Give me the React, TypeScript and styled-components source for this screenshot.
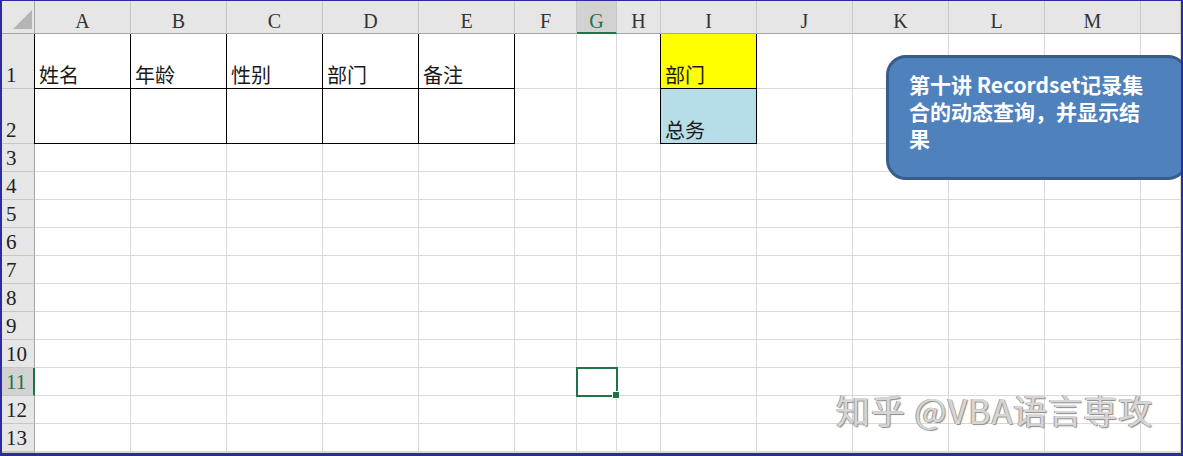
import React from 'react';
import styled, { createGlobalStyle, css } from 'styled-components';

const GlobalStyle = createGlobalStyle`
  html, body {
    margin: 0;
    padding: 0;
    background: #fff;
  }
  * {
    box-sizing: border-box;
  }
`;

const GREEN = '#217346';
const GRID = '#d9d9d9';
const HEAD_LINE = '#a6a6a6';

const columns = [
  { key: 'A', width: 96 },
  { key: 'B', width: 96 },
  { key: 'C', width: 96 },
  { key: 'D', width: 96 },
  { key: 'E', width: 96 },
  { key: 'F', width: 62 },
  { key: 'G', width: 40 },
  { key: 'H', width: 44 },
  { key: 'I', width: 96 },
  { key: 'J', width: 96 },
  { key: 'K', width: 96 },
  { key: 'L', width: 96 },
  { key: 'M', width: 96 },
];

const rowHeights = [55, 55, 28, 28, 28, 28, 28, 28, 28, 28, 28, 28, 28];

type CellData = { text?: string; bg?: string; box?: boolean };

const cells: Record<string, CellData> = {
  A1: { text: '姓名', box: true },
  B1: { text: '年龄', box: true },
  C1: { text: '性别', box: true },
  D1: { text: '部门', box: true },
  E1: { text: '备注', box: true },
  A2: { box: true },
  B2: { box: true },
  C2: { box: true },
  D2: { box: true },
  E2: { box: true },
  I1: { text: '部门', bg: '#ffff00', box: true },
  I2: { text: '总务', bg: '#b7dde8', box: true },
};

const activeCol = 'G';
const activeRow = 11;

const Frame = styled.div`
  position: relative;
  width: 1183px;
  height: 456px;
  overflow: hidden;
  border-style: solid;
  border-color: #2c2ca0;
  border-width: 1px 2px 3px 2px;
  background: #fff;
`;

const Sheet = styled.div`
  display: grid;
  grid-template-columns: 33px ${columns.map((c) => `${c.width}px`).join(' ')} 1fr;
  grid-template-rows: 33px ${rowHeights.map((h) => `${h}px`).join(' ')} 1fr;
  height: 100%;
`;

const Corner = styled.div`
  position: relative;
  background: #e6e6e6;
  border-right: 1px solid ${HEAD_LINE};
  border-bottom: 1px solid ${HEAD_LINE};

  &:after {
    content: '';
    position: absolute;
    right: 2px;
    bottom: 4px;
    width: 0;
    height: 0;
    border-left: 19px solid transparent;
    border-bottom: 19px solid #b5b5b5;
  }
`;

const ColHead = styled.div<{ $active?: boolean }>`
  display: flex;
  align-items: center;
  justify-content: center;
  padding-top: 9px;
  background: ${({ $active }) => ($active ? '#d2d2d2' : '#e6e6e6')};
  border-right: 1px solid #c6c6c6;
  border-bottom: ${({ $active }) => ($active ? `2px solid ${GREEN}` : `1px solid ${HEAD_LINE}`)};
  font-family: 'Liberation Serif', serif;
  font-size: 20px;
  color: ${({ $active }) => ($active ? GREEN : '#333')};
`;

const RowHead = styled.div<{ $active?: boolean }>`
  display: flex;
  align-items: flex-end;
  padding: 0 0 0 4px;
  background: ${({ $active }) => ($active ? '#d2d2d2' : '#e6e6e6')};
  border-bottom: 1px solid #c6c6c6;
  border-right: ${({ $active }) => ($active ? `2px solid ${GREEN}` : `1px solid ${HEAD_LINE}`)};
  font-family: 'Liberation Serif', serif;
  font-size: 21px;
  line-height: 26px;
  color: ${({ $active }) => ($active ? GREEN : '#222')};
`;

const Cell = styled.div<{ $bg?: string; $box?: boolean; $active?: boolean }>`
  position: relative;
  display: flex;
  align-items: flex-end;
  padding: 0 0 0 4px;
  background: ${({ $bg }) => $bg || '#fff'};
  border-right: 1px solid ${GRID};
  border-bottom: 1px solid ${GRID};
  font-family: 'Noto Sans CJK SC', sans-serif;
  font-size: 20px;
  line-height: 26px;
  color: #1a1a1a;
  white-space: nowrap;

  ${({ $box }) =>
    $box &&
    css`
      border-right-color: #000;
      border-bottom-color: #000;
      box-shadow: -1px 0 0 #000;
    `}

  ${({ $active }) =>
    $active &&
    css`
      z-index: 2;
      outline: 2px solid ${GREEN};
      outline-offset: -1px;

      &:after {
        content: '';
        position: absolute;
        right: -4px;
        bottom: -4px;
        width: 6px;
        height: 6px;
        background: ${GREEN};
        border: 1px solid #fff;
      }
    `}
`;

const Callout = styled.div`
  position: absolute;
  left: 884px;
  top: 54px;
  width: 302px;
  height: 125px;
  padding: 13px 20px 0 20px;
  background: #4f81bd;
  border: 3px solid #385d8a;
  border-radius: 20px;
  z-index: 5;
`;

const CalloutText = styled.div`
  width: 240px;
  font-family: 'Noto Sans CJK SC', sans-serif;
  font-weight: 700;
  font-size: 21px;
  line-height: 27px;
  color: #fff;
`;

const Watermark = styled.div`
  position: absolute;
  left: 834px;
  top: 389px;
  z-index: 5;
  font-family: 'Noto Sans CJK SC', sans-serif;
  font-size: 34px;
  line-height: 40px;
  letter-spacing: 1px;
  color: #d6d6d6;
  text-shadow: -1px 0 0 #a0a0a0, 1px 1px 1px #8a8a8a;
  white-space: nowrap;
`;

const App = () => {
  return (
    <>
      <GlobalStyle />
      <Frame>
        <Sheet>
          <Corner />
          {columns.map((c) => (
            <ColHead key={c.key} $active={c.key === activeCol}>
              {c.key}
            </ColHead>
          ))}
          <ColHead />

          {rowHeights.map((_, i) => {
            const row = i + 1;
            return (
              <React.Fragment key={row}>
                <RowHead $active={row === activeRow}>{row}</RowHead>
                {columns.map((c) => {
                  const data = cells[`${c.key}${row}`] || {};
                  return (
                    <Cell
                      key={c.key}
                      $bg={data.bg}
                      $box={data.box}
                      $active={c.key === activeCol && row === activeRow}
                    >
                      {data.text}
                    </Cell>
                  );
                })}
                <Cell />
              </React.Fragment>
            );
          })}

          <RowHead />
          {columns.map((c) => (
            <Cell key={c.key} />
          ))}
          <Cell />
        </Sheet>

        <Callout>
          <CalloutText>第十讲 Recordset记录集合的动态查询，并显示结果</CalloutText>
        </Callout>

        <Watermark>知乎 @VBA语言専攻</Watermark>
      </Frame>
    </>
  );
};

export default App;
